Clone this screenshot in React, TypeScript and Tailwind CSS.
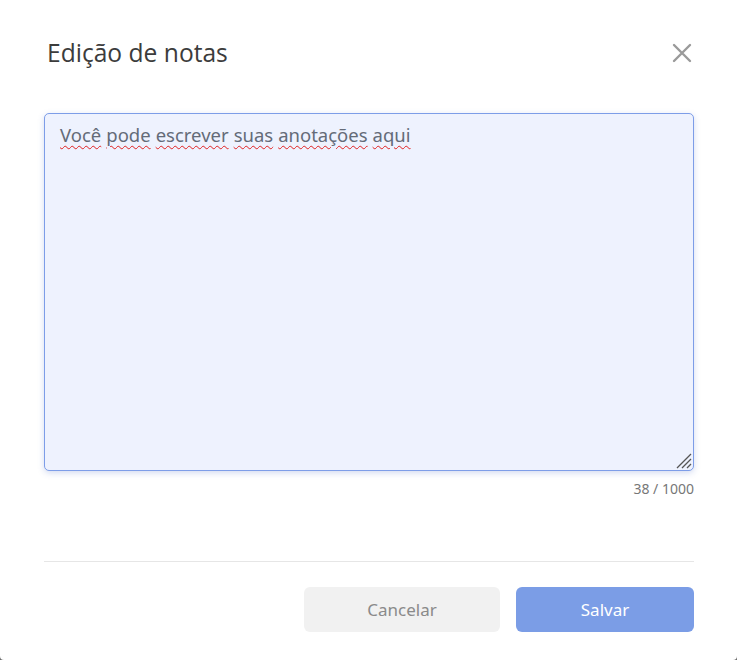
import React from "react";

const words = ["Você", "pode", "escrever", "suas", "anotações", "aqui"];

export default function App() {
  return (
    <div className="w-[737px] h-[660px] bg-[#6b6b6b]" style={{ fontFamily: '"Open Sans", sans-serif' }}>
      <div className="w-[737px] h-[660px] bg-white rounded-b-[4px] flex flex-col pl-[44px] pr-[43px]">
        <div className="flex justify-between pt-[35px] h-[88px] items-start">
          <h1 className="text-[24.6px] leading-[36px] text-[#3c3c3c] pl-[3px]">Edição de notas</h1>
          <button className="w-[24px] h-[24px] mr-[0px] mt-[6px] flex items-center justify-center">
            <svg width="20" height="20" viewBox="0 0 20 20">
              <path d="M2 2 L18 18 M18 2 L2 18" stroke="#9a9a9a" strokeWidth="2.4" strokeLinecap="round" />
            </svg>
          </button>
        </div>
        <div className="mt-[25px] relative h-[358px] w-[650px] rounded-[5px] border border-[#7d9de8] bg-[#eef2fe] shadow-[0_2px_6px_rgba(80,110,200,0.25)] px-[15px] pt-[8px]">
          <div className="text-[18.5px] leading-[26px] text-[#646b78] flex gap-[5px]" style={{ fontFamily: '"Noto Sans", "Open Sans", sans-serif' }}>
            {words.map((w) => (
              <span key={w} className="underline decoration-wavy decoration-[#e02020] decoration-[1px] underline-offset-[3px]">{w}</span>
            ))}
          </div>
          <svg className="absolute right-[1px] bottom-[1px]" width="18" height="18" viewBox="0 0 18 18">
            <path d="M17 3 L3 17 M17 8 L8 17 M17 13 L13 17" stroke="#555" strokeWidth="1.3" />
          </svg>
        </div>
        <div className="text-right text-[14px] text-[#777] mt-[8px] leading-[20px]" style={{ fontFamily: '"Noto Sans", sans-serif' }}>38 / 1000</div>
        <div className="mt-[62px] border-t border-[#e6e6e6]" />
        <div className="flex justify-end gap-[16px] mt-[25px]">
          <button className="w-[196px] h-[45px] rounded-[6px] bg-[#f1f1f1] text-[#8a8a8a] text-[17px]" style={{ fontFamily: '"Noto Sans", sans-serif' }}>Cancelar</button>
          <button className="w-[178px] h-[45px] rounded-[6px] bg-[#7b9de6] text-white text-[17px]" style={{ fontFamily: '"Noto Sans", sans-serif' }}>Salvar</button>
        </div>
      </div>
    </div>
  );
}
